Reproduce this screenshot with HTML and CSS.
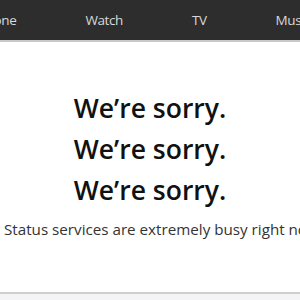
FILE: index.html
```html
<!DOCTYPE html>
<html>
<head>
<meta charset="utf-8">
<link rel="stylesheet" href="styles.css">
</head>
<body>
<nav class="nav">
  <ul class="nav-list">
    <li class="nav-item">iPhone</li>
    <li class="nav-item">Watch</li>
    <li class="nav-item">TV</li>
    <li class="nav-item">Music</li>
    <li class="nav-item">Support</li>
  </ul>
</nav>
<main class="main">
  <h1 class="sorry">We’re sorry.</h1>
  <h1 class="sorry">We’re sorry.</h1>
  <h1 class="sorry">We’re sorry.</h1>
  <p class="status"><span class="dot"></span>Status services are extremely busy right now.</p>
</main>
<footer class="footer"></footer>
</body>
</html>
```
FILE: styles.css
```css
html, body {
  margin: 0;
  padding: 0;
  width: 300px;
  height: 300px;
  overflow: hidden;
  background: #fff;
  font-family: "Open Sans", "Noto Sans", sans-serif;
}
.nav {
  height: 40px;
  background: #2d2d2d;
  border-bottom: 2px solid #c9c9c9;
  overflow: hidden;
}
.nav-list {
  list-style: none;
  margin: 0 0 0 -25px;
  padding: 0;
  display: flex;
  gap: 69px;
  white-space: nowrap;
}
.nav-item {
  color: #d8d8d8;
  font-size: 13.5px;
  letter-spacing: -0.4px;
  line-height: 40px;
}
.main {
  height: 250px;
  padding-top: 1px;
  box-sizing: border-box;
}
.sorry {
  margin: 0;
  text-align: center;
  font-size: 26.5px;
  font-weight: 600;
  line-height: 41px;
  color: #111;
}
.sorry:first-child {
  margin-top: 45px;
}
.status {
  margin: 8px 0 0 0;
  font-size: 15.2px;
  line-height: 20px;
  color: #333;
  white-space: nowrap;
  display: flex;
  align-items: center;
  gap: 4px;
}
.dot {
  width: 1px;
  height: 6px;
  background: #8fb8e6;
}
.footer {
  height: 10px;
  border-top: 2px solid #cfcfcf;
  background: #f4f4f6;
}
```
